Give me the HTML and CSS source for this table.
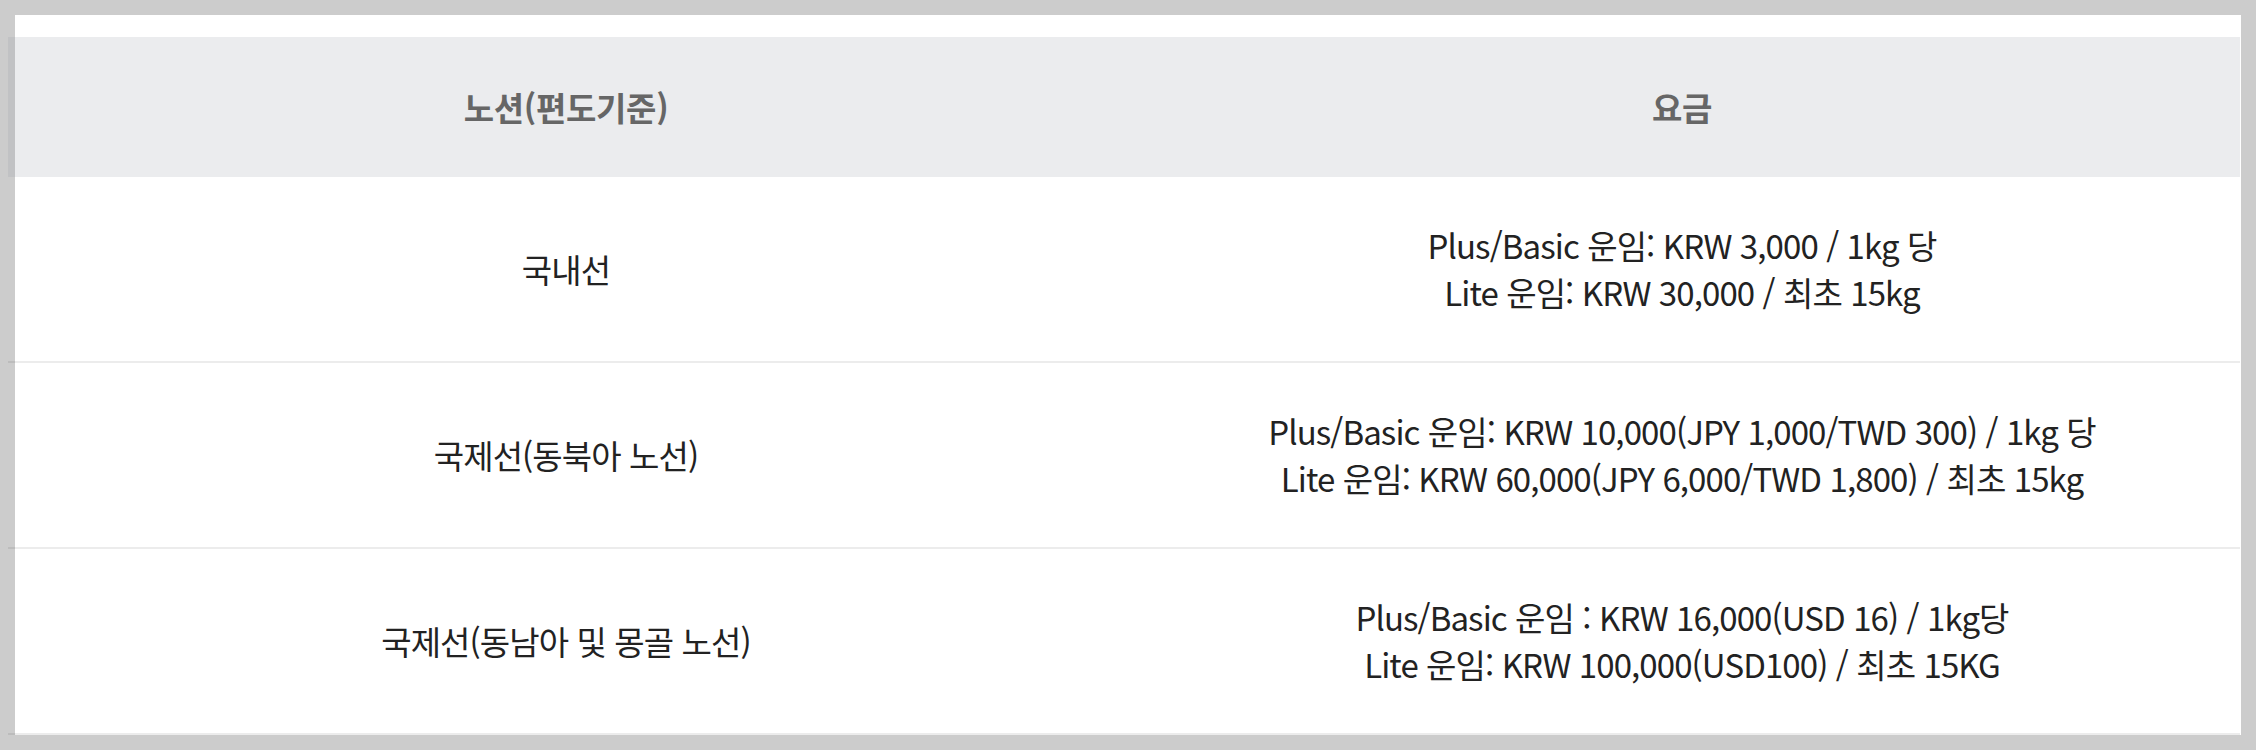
FILE: index.html
```html
<!DOCTYPE html>
<html lang="ko">
<head>
<meta charset="utf-8">
<link rel="stylesheet" href="styles.css">
</head>
<body>
<div class="panel">
  <table class="fare">
    <thead>
      <tr>
        <th>노션(편도기준)</th>
        <th>요금</th>
      </tr>
    </thead>
    <tbody>
      <tr>
        <td>국내선</td>
        <td>Plus/Basic 운임: KRW 3,000 / 1kg 당<br>Lite 운임: KRW 30,000 / 최초 15kg</td>
      </tr>
      <tr>
        <td>국제선(동북아 노선)</td>
        <td>Plus/Basic 운임: KRW 10,000(JPY 1,000/TWD 300) / 1kg 당<br>Lite 운임: KRW 60,000(JPY 6,000/TWD 1,800) / 최초 15kg</td>
      </tr>
      <tr>
        <td>국제선(동남아 및 몽골 노선)</td>
        <td>Plus/Basic 운임 : KRW 16,000(USD 16) / 1kg당<br>Lite 운임: KRW 100,000(USD100) / 최초 15KG</td>
      </tr>
    </tbody>
  </table>
</div>
</body>
</html>
```

FILE: styles.css
```css
html, body {
  margin: 0;
  padding: 0;
}
body {
  background: #cccccc;
  width: 2256px;
  height: 750px;
  overflow: hidden;
  font-family: "Noto Sans CJK KR", "Noto Sans", sans-serif;
}
.panel {
  margin: 15px 15px 0 15px;
  width: 2226px;
  height: 720px;
  background: #ffffff;
  padding-top: 22px;
  box-sizing: border-box;
}
.fare {
  margin-left: -7px;
  width: 2232px;
  border-collapse: collapse;
  table-layout: fixed;
}
.fare th {
  width: 50%;
  height: 140px;
  padding: 0;
  background: rgba(144, 149, 161, 0.18);
  color: #666666;
  font-size: 33px;
  font-weight: 700;
  letter-spacing: -0.3px;
  text-align: center;
  vertical-align: middle;
}
.fare td {
  height: 184px;
  padding: 0;
  border-bottom: 2px solid rgba(0, 0, 0, 0.075);
  color: #222222;
  font-size: 33px;
  line-height: 47px;
  letter-spacing: -0.9px;
  text-align: center;
  vertical-align: middle;
}
```
